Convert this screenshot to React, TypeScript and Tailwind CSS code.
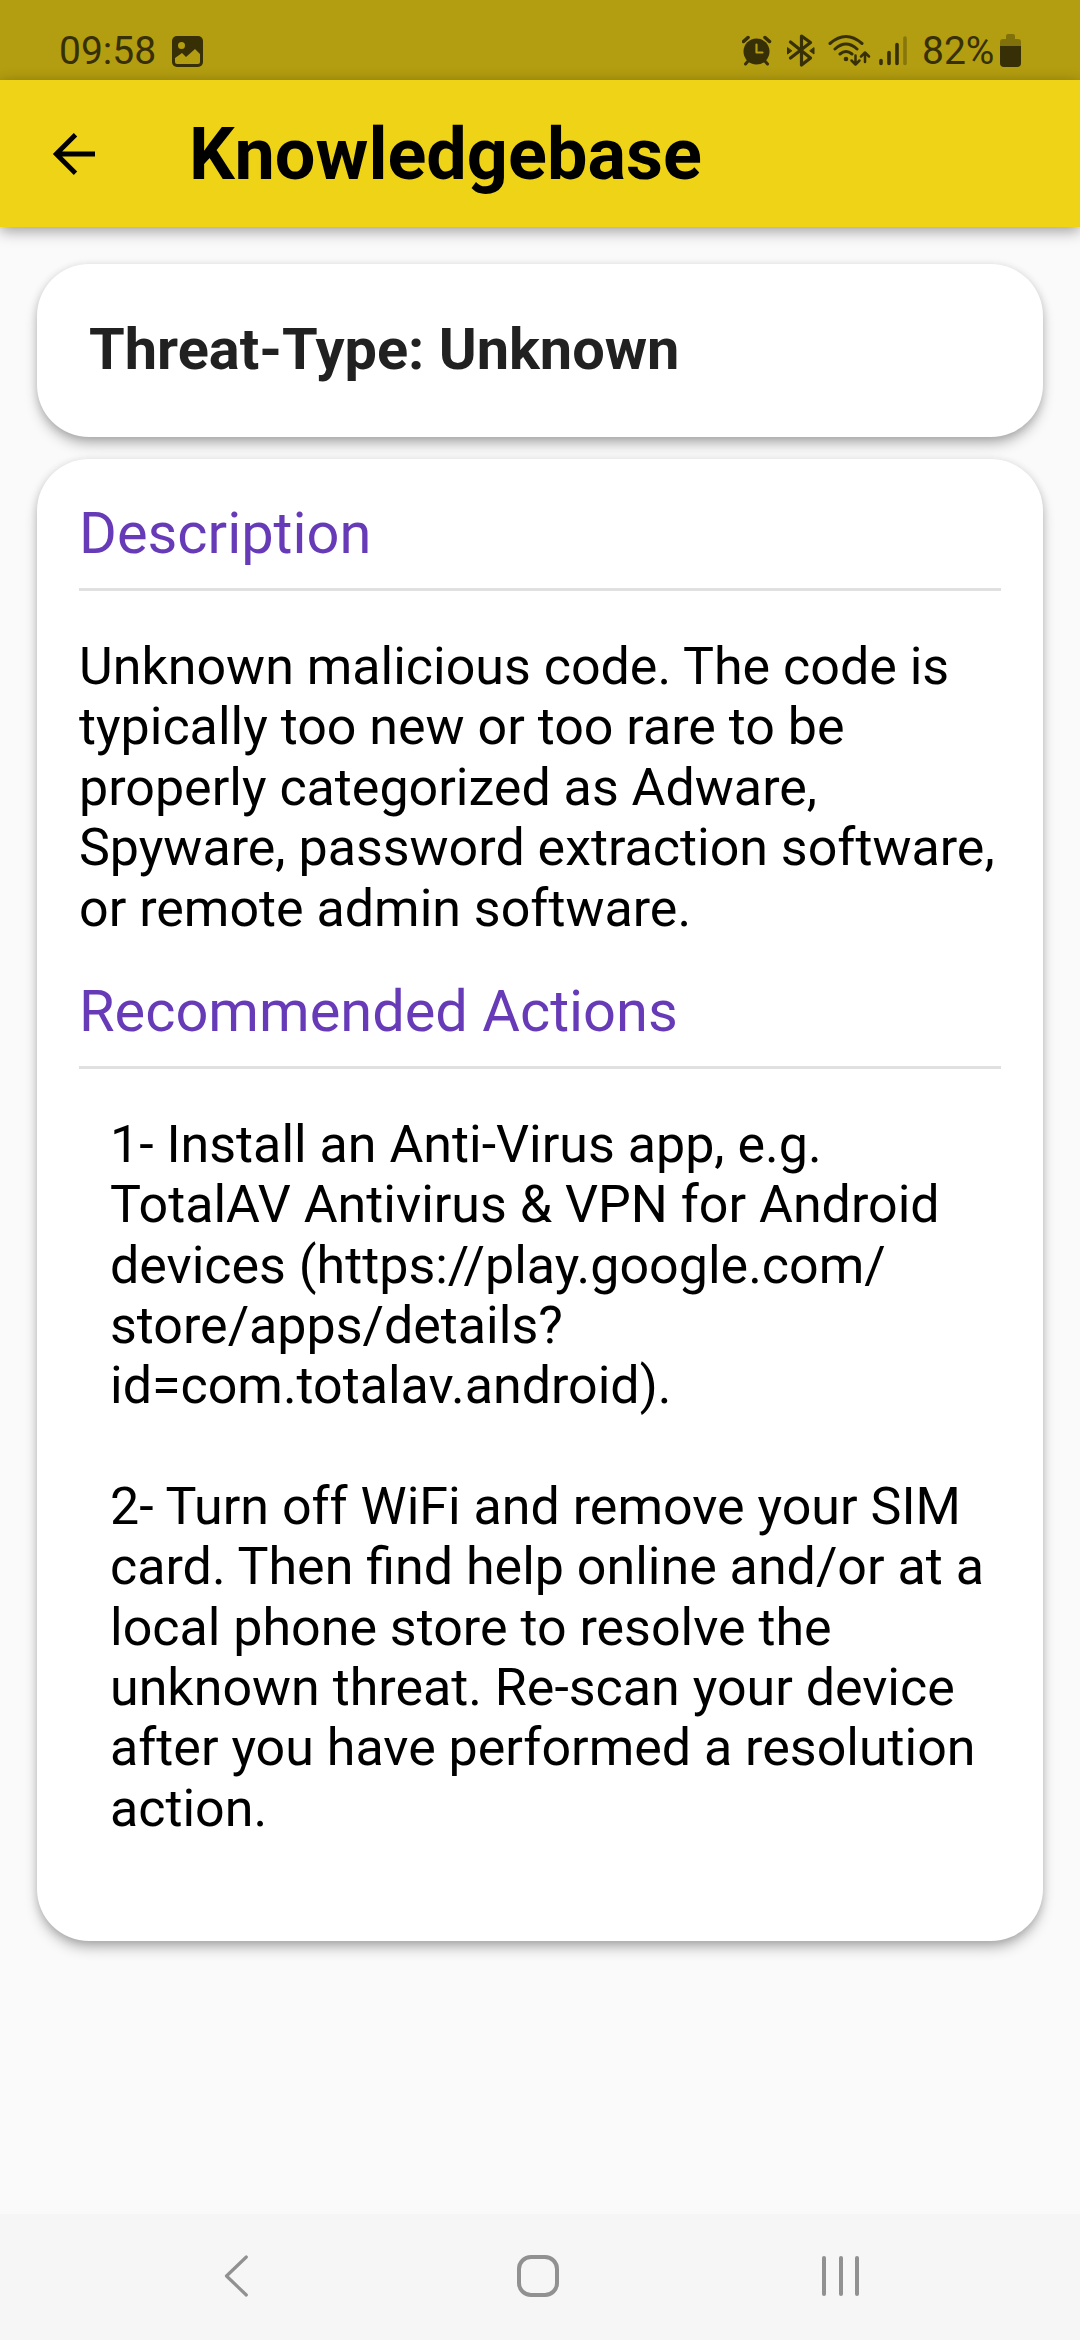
import type { ReactNode } from 'react';

const description = [
  'Unknown malicious code. The code is',
  'typically too new or too rare to be',
  'properly categorized as Adware,',
  'Spyware, password extraction software,',
  'or remote admin software.',
];

const actions = [
  '1- Install an Anti-Virus app, e.g.',
  'TotalAV Antivirus & VPN for Android',
  'devices (https://play.google.com/',
  'store/apps/details?',
  'id=com.totalav.android).',
  '\u00a0',
  '2- Turn off WiFi and remove your SIM',
  'card. Then find help online and/or at a',
  'local phone store to resolve the',
  'unknown threat. Re-scan your device',
  'after you have performed a resolution',
  'action.',
];

function StatusBar() {
  return (
    <div className="flex h-20 shrink-0 items-start bg-[#b39d10] pl-[59px] text-[#372f05]">
      <span className="mt-[22px] w-[113px] whitespace-nowrap text-[39px] leading-[58px] font-normal">09:58</span>
      <svg className="mt-9 h-[31px] w-[31px]" viewBox="0 0 31 31">
        <rect width="31" height="31" rx="5" fill="currentColor" />
        <circle cx="9.5" cy="9.5" r="3.5" fill="#b39d10" />
        <path d="M3 22l7-5 4 4 9-8 5 5v8q0 2-2 2H5q-2 0-2-2z" fill="#b39d10" />
      </svg>
      <svg className="ml-[539px] mt-[34px] h-[34px] w-[166px]" viewBox="742 34 166 34" fill="none" stroke="currentColor" strokeLinecap="round" strokeLinejoin="round">
        <circle cx="756.500" cy="51.500" r="13" fill="currentColor" stroke="none" />
        <path d="M743.500 41.500l4.500-4M769.500 41.500l-4.500-4" strokeWidth="3.500" />
        <path d="M749 60l-3.500 4M764 60l3.500 4" strokeWidth="3" />
        <path d="M756.500 44.500v8h6" stroke="#b39d10" strokeWidth="2.200" />
        <path d="M790.500 42l20 16L801.500 65V36l9 6.500-20 15.500" strokeWidth="3.200" />
        <path d="M787.500 48v6l4-3zM814 48v6l-4-3z" fill="currentColor" strokeWidth="1" />
        <path d="M830 43.500q16-14 32 0M835 49q11-10 22 0M840 54q6-5 12 0" strokeWidth="3" />
        <circle cx="846" cy="59" r="2.300" fill="currentColor" stroke="none" />
        <path d="M855.500 55.500V64M851.500 60.500l4 4 4-4M865 62v-9M861 56.500l4-4 4 4" strokeWidth="2.500" />
        <path d="M881 60.500v3M889 52.500v11M897 44.500v19" strokeWidth="3.600" />
        <path d="M905 38v25.500" strokeWidth="3.600" strokeOpacity=".35" />
      </svg>
      <span className="mt-[22px] ml-[14px] w-[78px] whitespace-nowrap text-[39px] leading-[58px] font-normal">82%</span>
      <svg className="mt-[34px] h-[33px] w-[21px]" viewBox="0 0 21 33" fill="currentColor">
        <path opacity=".4" d="M0 12V8q0-3 3-3h3V2q0-2 2-2h5q2 0 2 2v3h3q3 0 3 3v4z" />
        <path d="M0 12h21v17q0 4-4 4H4q-4 0-4-4z" />
      </svg>
    </div>
  );
}

function AppBar() {
  return (
    <header className="flex h-[147px] shrink-0 items-center bg-[#eed317] pl-[52px] shadow-[0_4px_14px_rgba(0,0,0,0.38)]">
      <svg className="h-[42px] w-[43px]" viewBox="0 0 43 42" fill="none" stroke="#000" strokeWidth="4.800">
        <path d="M43 21H4.500M23.500 1.700L4.200 21l19.300 19.300" />
      </svg>
      <h1 className="ml-[94px] pt-[2px] text-[72px] leading-none font-bold">Knowledgebase</h1>
    </header>
  );
}

function Section({ title, children }: { title: string; children: ReactNode }) {
  return (
    <div>
      <h3 className="h-[91px] border-b-3 border-[#e0e0e0] text-[57.750px] leading-[67px] text-[#673ab7]">{title}</h3>
      {children}
    </div>
  );
}

function Lines({ lines, className }: { lines: string[]; className: string }) {
  return (
    <div className={className}>
      {lines.map((line) => (
        <p key={line} className="whitespace-nowrap">{line}</p>
      ))}
    </div>
  );
}

function NavBar() {
  return (
    <nav className="flex h-[126px] shrink-0 items-start bg-[#f6f6f6] pt-[41px] pl-[224px] text-[#919191]">
      <svg className="h-[42px] w-6" viewBox="0 0 24 42" fill="none" stroke="currentColor" strokeWidth="3.200" strokeLinecap="round" strokeLinejoin="round">
        <path d="M22.300 2L2.500 21l19.800 19" />
      </svg>
      <span className="ml-[269px] h-[42px] w-[42px] rounded-[14px] border-4 border-current" />
      <span className="mt-px ml-[263px] flex gap-[12.500px]">
        <span className="h-10 w-1 rounded-full bg-current" />
        <span className="h-10 w-1 rounded-full bg-current" />
        <span className="h-10 w-1 rounded-full bg-current" />
      </span>
    </nav>
  );
}

export default function App() {
  return (
    <div className="flex h-[2340px] w-[1080px] flex-col overflow-hidden bg-[#fafafa] font-[Roboto,sans-serif] text-black">
      <StatusBar />
      <AppBar />
      <main className="flex flex-1 flex-col px-[37px] pt-[37px]">
        <section className="flex h-[173px] items-center rounded-[52px] bg-white pl-[52px] shadow-[0_8px_14px_-2px_rgba(0,0,0,0.3),0_1px_8px_rgba(0,0,0,0.12)]">
          <h2 className="pb-[2px] text-[57.700px] font-bold text-[#212121]">Threat-Type: Unknown</h2>
        </section>
        <section className="mt-[22px] flex h-[1482px] flex-col gap-[39px] rounded-[52px] bg-white px-[42px] pt-[41px] shadow-[0_8px_14px_-2px_rgba(0,0,0,0.3),0_1px_8px_rgba(0,0,0,0.12)]">
          <Section title="Description">
            <Lines lines={description} className="pt-[46px] text-[51.980px] leading-[60.400px]" />
          </Section>
          <Section title="Recommended Actions">
            <Lines lines={actions} className="pt-[46px] pl-[31px] text-[51.980px] leading-[60.350px]" />
          </Section>
        </section>
      </main>
      <NavBar />
    </div>
  );
}
